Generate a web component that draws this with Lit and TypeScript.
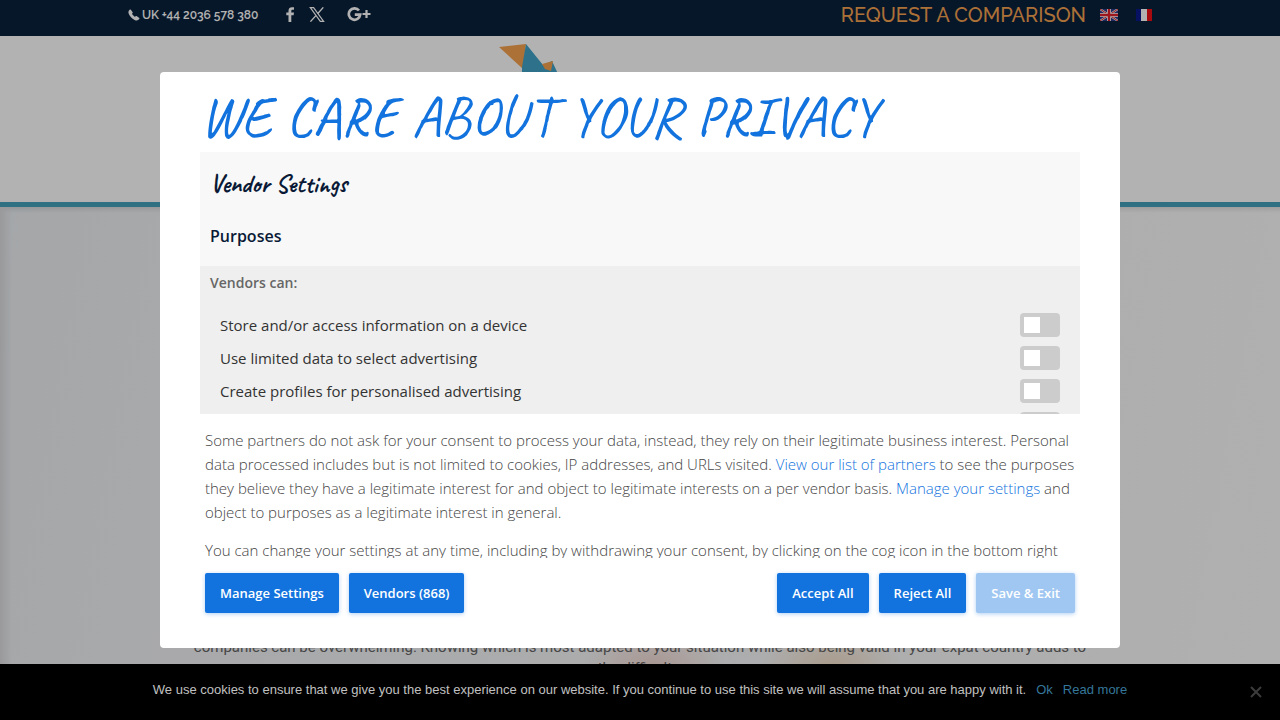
import { LitElement, html, css } from "lit";
import { customElement } from "lit/decorators.js";

@customElement("site-page")
class SitePage extends LitElement {
  static styles = css`
    :host { display: flex; flex-direction: column; height: 100%; background: #fff; }
    .topbar {
      display: flex; align-items: flex-start; justify-content: space-between;
      height: 36px; padding: 0 10%; background: #0a213d; color: #fff; flex: none;
      box-sizing: border-box; font-family: Raleway, Lato, sans-serif;
    }
    .group { display: flex; align-items: center; height: 30px; }
    .phone { display: flex; align-items: center; font-size: 12px; font-weight: 600; color: #fff; text-decoration: none; gap: 2px; }
    .social { display: flex; align-items: center; margin-left: 28px; gap: 14px; height: 28px; padding-bottom: 2px; }
    .social a { display: flex; }
    .social a:last-child { margin-left: 8px; }
    .request { color: #f7a24f; font-size: 20px; font-weight: 500; text-decoration: none; margin-right: 14px; }
    .flag { display: flex; margin-right: 18px; }
    .flag:last-child { margin-right: 0; }
    header { height: 166px; flex: none; border-bottom: 5px solid #44a1bb; }
    .logo { display: block; margin: 7px 0 0 39%; }
    main {
      flex: 1; overflow: hidden; box-sizing: border-box; padding: 430px 15% 0; text-align: center;
      font: 15px/21px Roboto, sans-serif; color: #666;
      background:
        radial-gradient(ellipse 70px 40px at 51% 460px, #f3d9d2, transparent),
        radial-gradient(ellipse 70px 40px at 65% 460px, #f3dfc8, transparent),
        linear-gradient(90deg, #dcdce0, transparent 12px),
        linear-gradient(#00000018, transparent 6px),
        linear-gradient(100deg, #ebeff2, #f1f2f5 14%, #fbfbfb 88%, #fcfcfc);
    }
    p { margin: 0; }
  `;
  render() {
    return html`
      <div class="topbar">
        <div class="group">
          <a class="phone" href="#phone">
            <svg width="12" height="12" viewBox="0 0 12 12"><path fill="#fff" d="M2.6.6 4.7 3.2c.2.4 0 .8-.5 1.400-.2.300 0 .5.200.8l2 2c.300.300.500.400.800.200.600-.500 1-.700 1.400-.500l2.700 1.900c.300.300.200.700-.100 1.100-1 1.500-2.700 1.700-4.600.800C3.900 9.600 1.700 7.200.700 4.700 0 2.900.700 1.500 2 .600c.200-.200.400-.200.600 0z"/></svg>
            UK +44 2036 578 380
          </a>
          <nav class="social" aria-label="Social">
            <a href="#facebook" aria-label="Facebook"><svg width="9" height="15" viewBox="0 0 9 15"><path fill="#fff" d="M2.500 15V8.300H.3V5.600h2.200V3.600C2.500 1.300 3.900.2 5.900.2c1 0 1.800.1 2.100.1v2.400H6.600c-1.100 0-1.300.6-1.300 1.300v1.600H8l-.4 2.700H5.300V15z"/></svg></a>
            <a href="#x" aria-label="X"><svg width="16" height="15" viewBox="0 0 16 15"><path fill="none" stroke="#fff" stroke-width="1.200" d="M1.300.7h3.300l10 13.600h-3.300z"/><path stroke="#fff" stroke-width="1.400" d="m14.300.4-5.700 6.400M6.900 8.600l-5.500 6"/></svg></a>
            <a href="#google" aria-label="Google+"><svg width="24" height="15" viewBox="0 0 24 15"><path fill="none" stroke="#fff" stroke-width="2.700" d="M12 3.500A5.700 5.700 0 1 0 13.200 7.700H7.800"/><path stroke="#fff" stroke-width="2.200" d="M15.500 7h8M19.500 3v8"/></svg></a>
          </nav>
        </div>
        <div class="group">
          <a class="request" href="#request">REQUEST A COMPARISON</a>
          <a class="flag" href="#en" aria-label="English"><svg width="18" height="12" viewBox="0 0 18 12"><path fill="#2b3a8c" d="M0 0h18v12H0z"/><path stroke="#fff" stroke-width="2" d="m0 0 18 12M18 0 0 12"/><path stroke="#d22" stroke-width="1" d="m0 0 18 12M18 0 0 12"/><path stroke="#fff" stroke-width="4" d="M9 0v12M0 6h18"/><path stroke="#e0202c" stroke-width="2.400" d="M9 0v12M0 6h18"/></svg></a>
          <a class="flag" href="#fr" aria-label="Français"><svg width="16" height="12" viewBox="0 0 16 12"><path fill="#0a1a8c" d="M0 0h5v12H0z"/><path fill="#fff" d="M5 0h6v12H5z"/><path fill="#f01018" d="M11 0h5v12h-5z"/></svg></a>
        </div>
      </div>
      <header>
        <svg class="logo" width="64" height="60" viewBox="0 0 64 60"><path fill="#f7a24f" d="M0 4 27 1l-3 25z"/><path fill="#43a3c7" d="m27 1 17 21 9-4 14 30H23V24z"/><path fill="#f7a24f" d="m43 21 11-3-2 10-6-2z"/></svg>
      </header>
      <main>
        <p>companies can be overwhelming. Knowing which is most adapted to your situation while also being valid in your expat country adds to the difficulty.</p>
      </main>`;
  }
}

@customElement("consent-dialog")
class ConsentDialog extends LitElement {
  static styles = css`
    :host {
      display: flex; flex-direction: column; box-sizing: border-box; width: 75%; height: 80%;
      padding: 20px 40px 35px; background: #fff; border-radius: 4px;
      font-family: "Open Sans", sans-serif; color: #333;
    }
    h1, h2, h3, p { margin: 0; }
    h1 { height: 60px; flex: none; font: 400 57px/50px "Caveat", cursive; color: #1273de; white-space: nowrap; }
    .panel { flex: 262 1 0; overflow: hidden; background: #f8f8f8; }
    h2 { padding: 14px 10px 0; font: 600 25px/36px "Caveat", cursive; color: #0a1a36; }
    h3 { padding: 22px 10px 18px; font-size: 16px; line-height: 24px; font-weight: 600; color: #0a1a36; }
    .list { background: #efefef; padding: 5px 10px 0; height: 300px; }
    .lead { font-size: 14px; line-height: 24px; font-weight: 600; color: #666; margin-bottom: 13px; }
    .row { display: flex; align-items: center; justify-content: space-between; height: 33px; padding: 0 10px; font-size: 15px; }
    .toggle { appearance: none; margin: 0; width: 40px; height: 24px; border-radius: 4px; background: #ccc; padding: 4px; }
    .toggle::before { content: ""; display: block; width: 16px; height: 16px; background: #fff; }
    .toggle:checked { background: #1273de; }
    .toggle:checked::before { margin-left: auto; }
    .statement { flex: 144 1 0; overflow: hidden; font-size: 15px; line-height: 24px; font-weight: 300; color: #444; }
    .statement p { margin: 14px 5px 0; }
    .statement a { color: #1273de; text-decoration: none; }
    .actions { display: flex; gap: 10px; padding: 0 5px; margin-top: 15px; flex: none; }
    button {
      height: 40px; padding: 0 15px; border: 0; border-radius: 2px; background: #1273de; color: #fff;
      font: 600 13px/20px "Open Sans", sans-serif; box-shadow: 0 1px 4px #1273de55;
    }
    .push { margin-left: auto; }
    button:disabled { background: #a0c7f2; }
  `;
  purposes = [
    "Store and/or access information on a device",
    "Use limited data to select advertising",
    "Create profiles for personalised advertising",
    "Use profiles to select personalised advertising",
  ];
  render() {
    return html`
      <h1>WE CARE ABOUT YOUR PRIVACY</h1>
      <section class="panel">
        <h2>Vendor Settings</h2>
        <h3>Purposes</h3>
        <div class="list">
          <p class="lead">Vendors can:</p>
          ${this.purposes.map((p, i) => html`
            <div class="row"><label for="purpose-${i}">${p}</label><input class="toggle" type="checkbox" id="purpose-${i}"></div>`)}
        </div>
      </section>
      <section class="statement">
        <p>Some partners do not ask for your consent to process your data, instead, they rely on their legitimate business interest. Personal data processed includes but is not limited to cookies, IP addresses, and URLs visited. <a href="#partners">View our list of partners</a> to see the purposes they believe they have a legitimate interest for and object to legitimate interests on a per vendor basis. <a href="#settings">Manage your settings</a> and object to purposes as a legitimate interest in general.</p>
        <p>You can change your settings at any time, including by withdrawing your consent, by clicking on the cog icon in the bottom right</p>
      </section>
      <div class="actions">
        <button>Manage Settings</button>
        <button>Vendors (868)</button>
        <button class="push">Accept All</button>
        <button>Reject All</button>
        <button disabled>Save &amp; Exit</button>
      </div>`;
  }
}

@customElement("cookie-bar")
class CookieBar extends LitElement {
  static styles = css`
    :host {
      display: flex; align-items: center; justify-content: center; gap: 10px; height: 56px;
      box-sizing: border-box; padding-bottom: 5px; background: #000; color: #c0c0c0;
      font: 13px/20px "Liberation Sans", Arial, sans-serif;
    }
    a { color: #35779a; text-decoration: none; }
    button { position: absolute; right: 16px; bottom: 20px; display: flex; padding: 2px; border: 0; background: none; }
  `;
  render() {
    return html`
      <span>We use cookies to ensure that we give you the best experience on our website. If you continue to use this site we will assume that you are happy with it.</span>
      <a href="#ok">Ok</a><a href="#more">Read more</a>
      <button aria-label="Close"><svg width="12" height="12" viewBox="0 0 12 12"><path stroke="#3c3c3c" stroke-width="2" d="m1 1 10 10M11 1 1 11"/></svg></button>`;
  }
}

@customElement("app-root")
class AppRoot extends LitElement {
  static styles = css`
    :host { display: block; position: relative; height: 100vh; overflow: hidden; }
    .overlay { position: absolute; inset: 0; display: flex; align-items: center; justify-content: center; background: rgba(0, 0, 0, 0.3); }
    .bar { position: absolute; left: 0; right: 0; bottom: 0; }
  `;
  render() {
    return html`
      <site-page></site-page>
      <div class="overlay"><consent-dialog role="dialog" aria-label="Privacy"></consent-dialog></div>
      <cookie-bar class="bar"></cookie-bar>`;
  }
}
